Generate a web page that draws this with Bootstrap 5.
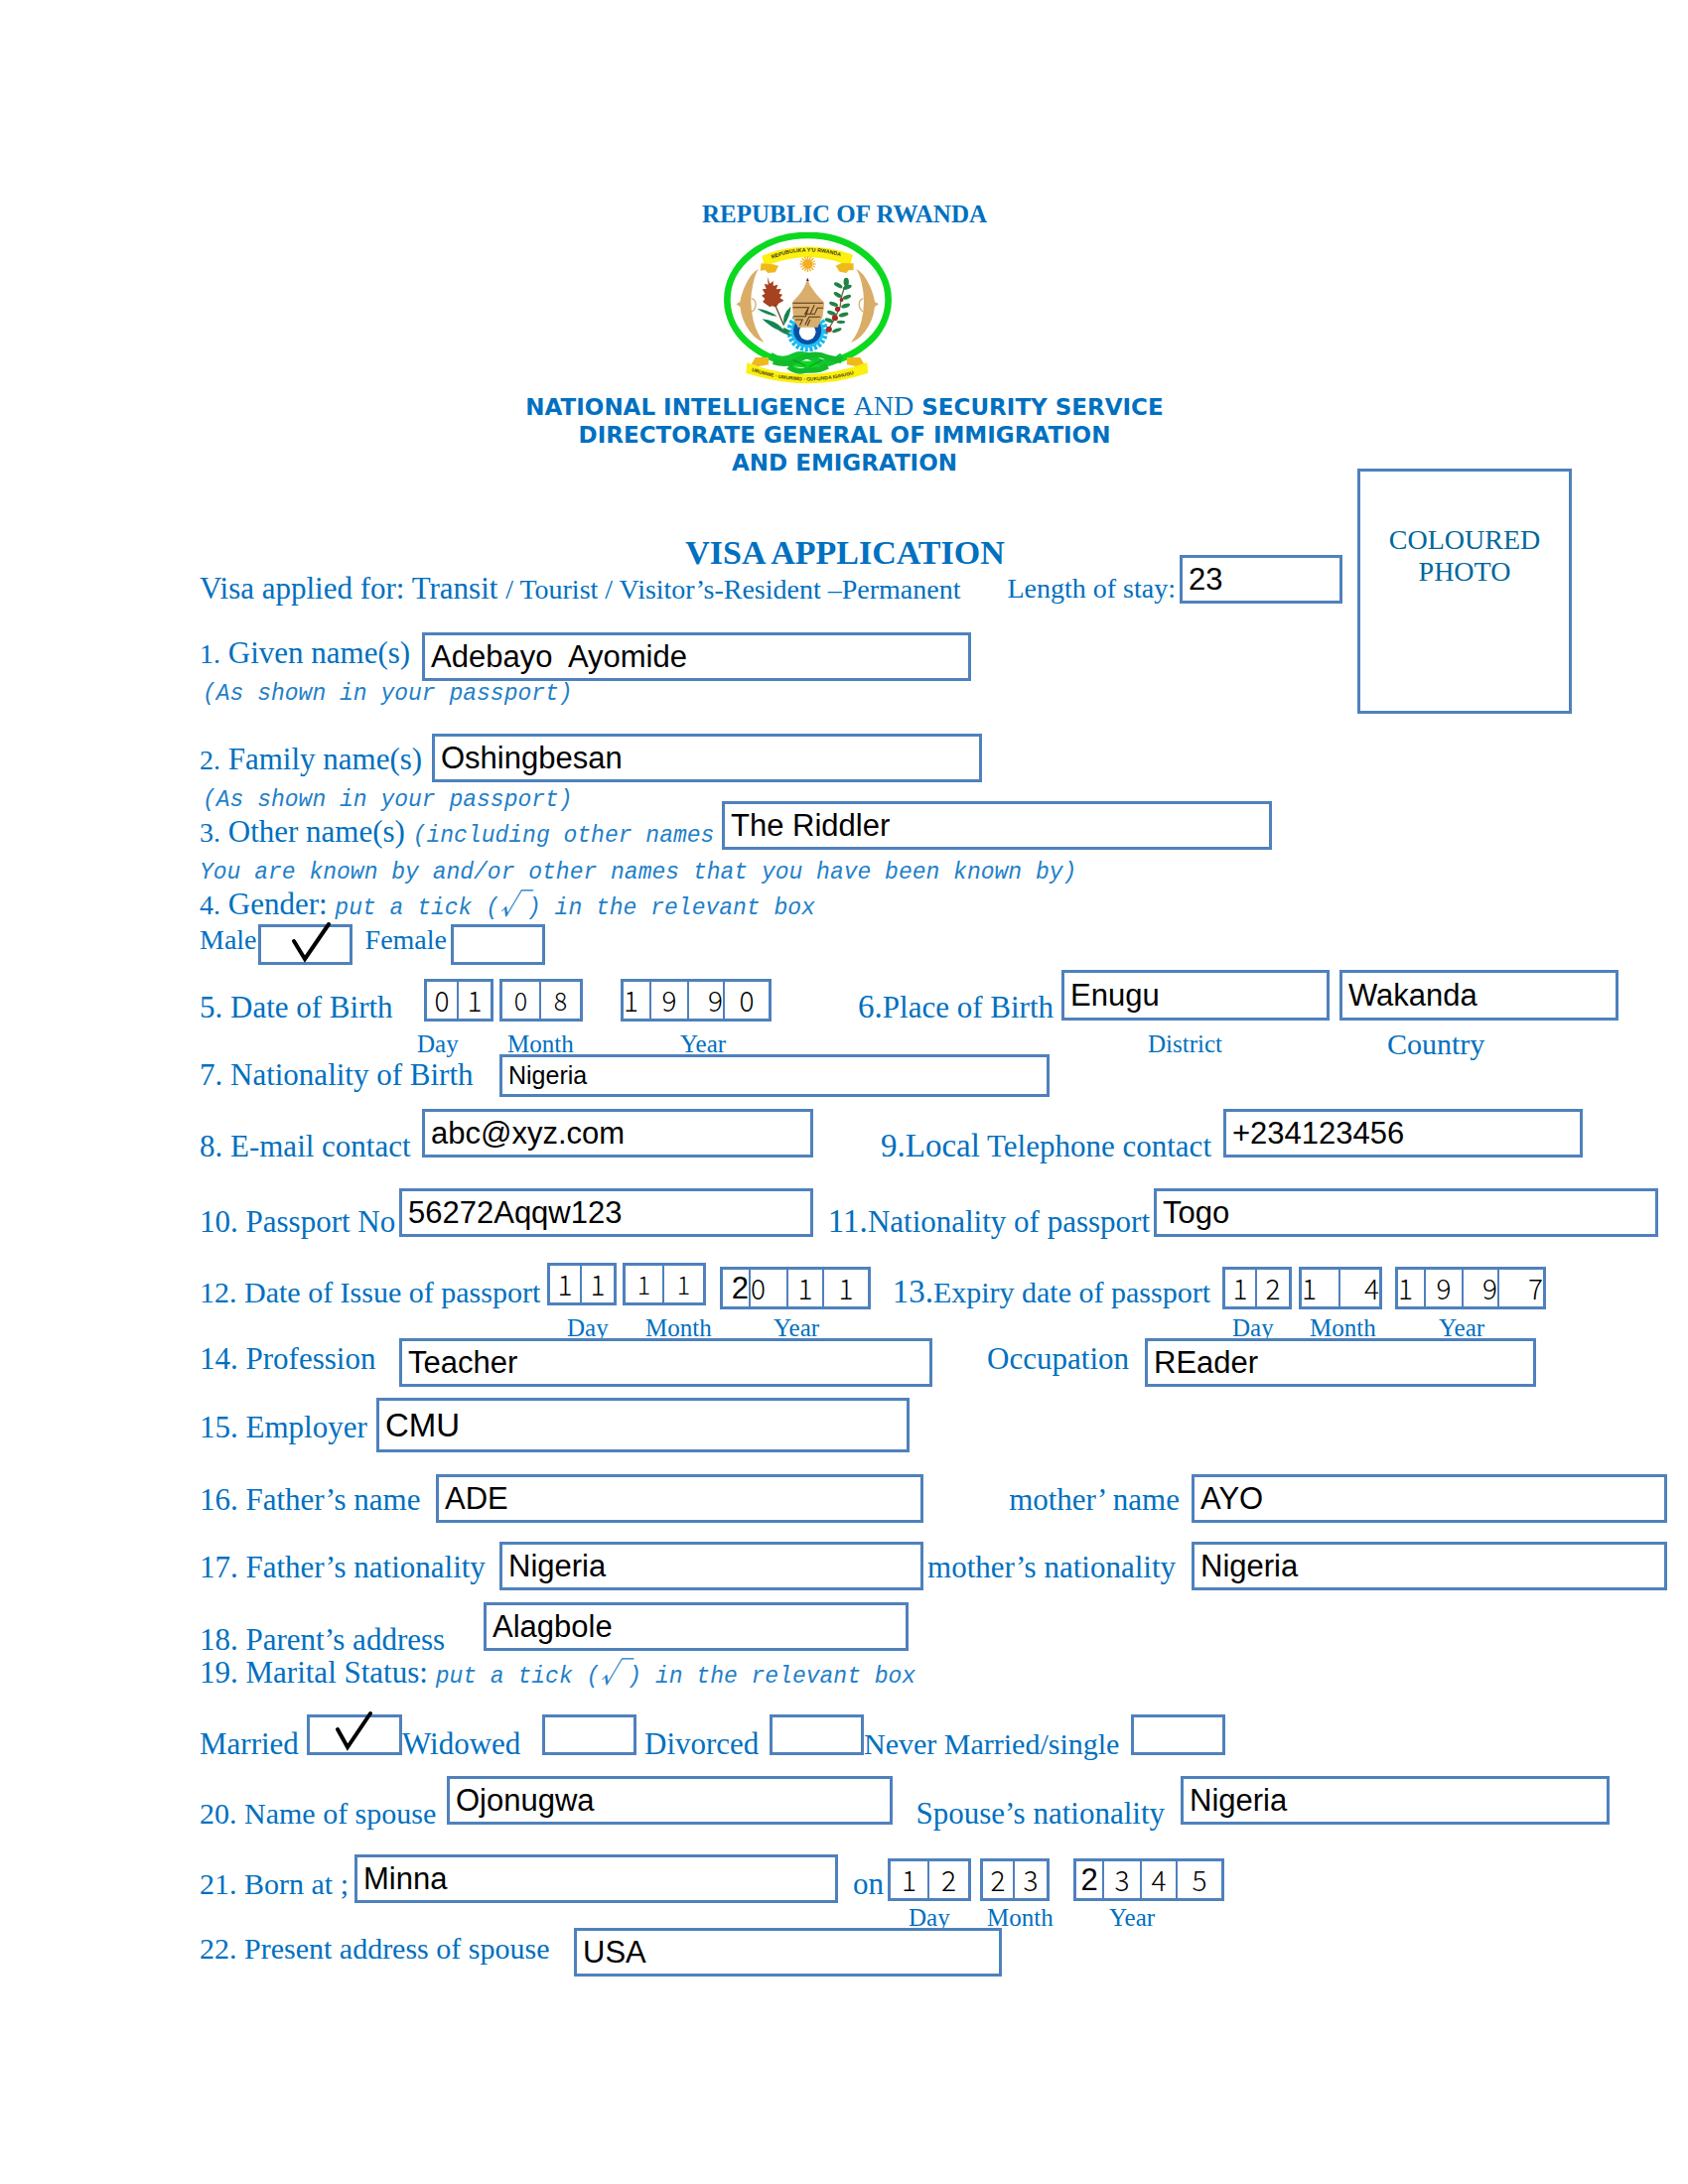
<!DOCTYPE html>
<html lang="en">
<head>
<meta charset="utf-8">
<meta name="viewport" content="width=device-width, initial-scale=1">
<title>Visa Application</title>
<link href="https://cdn.jsdelivr.net/npm/bootstrap@5.3.0/dist/css/bootstrap.min.css" rel="stylesheet">
<style>
:root { --ink: #0070c0; --rule: #4f81bd; }
body { background: #fff; color: var(--ink); font-family: "Liberation Serif", serif; font-size: 31px; line-height: 32px; }
.sheet { padding: 202px 21px 100px 201px; }
.masthead { padding-right: 179px; }
.state { font-size: 25px; line-height: 28px; font-weight: 700; margin: 0; }
.emblem { display: block; width: 169px; height: 155px; margin: 4px auto 7px; }
.emblem-wrap { padding-right: 75px; }
.agency { font: 700 23px/28px "DejaVu Sans", sans-serif; margin: 0; }
.agency-and { font: 400 28px/20px "Liberation Serif", serif; }
.top-part { display: grid; grid-template-columns: 1166fr 216fr 96fr; }
.form-title { font-size: 34px; line-height: 36px; font-weight: 700; margin: 0; padding: 59px 0 0 134px; }
.photo { border: 3px solid var(--rule); height: 247px; margin-top: -8px; padding-top: 53px; font-size: 28px; color: #00679c; }

/* form lines: columns are proportional shares of the sheet width */
.line { display: grid; align-items: start; }
.line > *, .captions > * { min-width: 0; white-space: nowrap; }
.t28 { font-size: 28px; }
.t33 { font-size: 33px; line-height: 20px; }
.t30 { font-size: 30px; }
.drop-0 { padding-top: 2px; }
.drop-1 { padding-top: 5px; }
.drop-2 { padding-top: 10px; }
.drop-3 { padding-top: 14px; }
.drop-4 { padding-top: 18px; }
.drop-5 { padding-top: 22px; }
.end-m { text-align: right; padding-right: 12px; }
.end-s { text-align: right; padding-right: 4px; }
.note { font: italic 400 23px/28px "Liberation Mono", monospace; margin: 0; color: #1f80c8; }
.root-sign { font-family: "Noto Sans CJK JP", sans-serif; font-size: 28px; line-height: 0; }
.indent { padding-left: 3px; }

.box-in { position: relative; display: block; width: 100%; height: 49px; border: 3px solid var(--rule); border-radius: 0; background: #fff; color: #000; padding: 0 6px; font: 400 31px/35px "Liberation Sans", sans-serif; }
.box-in.tall { height: 51px; }
.box-in.taller { height: 55px; font-size: 33px; }
.box-in.short { height: 43px; font-size: 25px; }
.box-in.raised { margin-top: -13px; }
.box-in.raised-more { margin-top: -16px; }

.tickbox { position: relative; display: block; height: 41px; }
.tickbox input { appearance: none; display: block; width: 100%; height: 100%; margin: 0; border: 3px solid var(--rule); background: #fff; }
.tickbox svg { position: absolute; left: 0; top: 0; overflow: visible; pointer-events: none; }

.dates { display: grid; }
.dates > :nth-child(2) { grid-column: 3; }
.dates > :nth-child(3) { grid-column: 5; }
.dates.birth { grid-template-columns: 70fr 6fr 84fr 38fr 152fr; }
.dates.issue { grid-template-columns: 70fr 6fr 84fr 14fr 152fr; }
.dates.expiry { grid-template-columns: 70fr 7fr 84fr 13fr 152fr; }
.dates.spouse { grid-template-columns: 84fr 9fr 70fr 24fr 152fr; }
.cells { display: grid; height: 43px; border: 3px solid var(--rule); background: #fff; min-width: 0; }
.cells.two { grid-template-columns: 1fr 1fr; }
.cells.four { grid-template-columns: 28fr 38fr 36fr 44fr; }
.cells input { width: 100%; min-width: 0; height: 37px; border: 0; border-right: 2px solid var(--rule); border-radius: 0; padding: 0; background: transparent; color: #000; text-align: center; font: 300 28px/37px "Noto Sans CJK JP", sans-serif; }
.cells input:last-child { border-right: 0; }
.cells.small-type input { font-size: 25px; }
.cells .plain { font: 400 31px/37px "Liberation Sans", sans-serif; }

.captions { display: grid; height: 24px; font-size: 25px; line-height: 28px; }
.captions > :first-child { grid-column: 2; }

.l-stay { grid-template-columns: 787fr 200fr 164fr 15fr; min-height: 62px; }
.l-given { grid-template-columns: 224fr 553fr 389fr; min-height: 48px; }
.l-given .box-in { margin-bottom: -1px; }
.l-family { grid-template-columns: 234fr 554fr 690fr; min-height: 53px; margin-top: 20px; }
.l-other { grid-template-columns: 526fr 554fr 398fr; min-height: 45px; }
.l-text { min-height: 38px; }
.l-sex { grid-template-columns: 59fr 95fr 99fr 95fr 1130fr; min-height: 46px; }
.l-birth { grid-template-columns: 226fr 350fr 292fr 270fr 10fr 281fr 49fr; min-height: 61px; }
.l-birth > :last-child { grid-column: 6; }
.l-birth .dates { padding-top: 9px; }
.c-birth { grid-template-columns: 219fr 91fr 174fr 471fr 241fr 282fr; }
.l-origin { grid-template-columns: 302fr 554fr 622fr; min-height: 55px; }
.l-contact { grid-template-columns: 224fr 394fr 413fr 362fr 85fr; min-height: 80px; }
.l-passport { grid-template-columns: 201fr 417fr 343fr 508fr 9fr; min-height: 75px; }
.l-validity { grid-template-columns: 350fr 326fr 354fr 326fr 122fr; min-height: 52px; }
.c-validity { grid-template-columns: 370fr 79fr 129fr 462fr 78fr 130fr 230fr; }
.l-work { grid-template-columns: 201fr 537fr 214fr 394fr 132fr; min-height: 60px; }
.l-employer { grid-template-columns: 178fr 537fr 763fr; min-height: 77px; }
.l-parents { grid-template-columns: 238fr 491fr 270fr 479fr; min-height: 68px; }
.l-parents-nat { grid-template-columns: 302fr 427fr 270fr 479fr; min-height: 61px; }
.l-address { grid-template-columns: 286fr 428fr 764fr; min-height: 55px; }
.l-status-title { min-height: 58px; }
.l-status { grid-template-columns: 108fr 96fr 141fr 95fr 134fr 95fr 269fr 95fr 445fr; min-height: 62px; }
.l-spouse { grid-template-columns: 249fr 449fr 290fr 432fr 58fr; min-height: 79px; }
.l-born { grid-template-columns: 156fr 487fr 50fr 339fr 446fr; min-height: 50px; }
.l-born .dates { align-self: center; }
.c-born { grid-template-columns: 714fr 79fr 123fr 562fr; }
.l-present { grid-template-columns: 377fr 431fr 670fr; }
</style>
<script src="https://cdn.jsdelivr.net/npm/bootstrap@5.3.0/dist/js/bootstrap.bundle.min.js"></script>
</head>
<body>
<form class="sheet">
  <header class="masthead text-center">
    <p class="state">REPUBLIC OF RWANDA</p>
    <div class="emblem-wrap">
    <svg class="emblem" viewBox="55 24 506 465" preserveAspectRatio="none" role="img" aria-label="Coat of arms of Rwanda">
      <ellipse cx="308" cy="228" rx="243" ry="195" fill="#fff" stroke="#0bd91f" stroke-width="20"/>
      <path d="M170 95 Q300 42 444 92 L434 132 L415 119 Q308 78 190 122 L178 131Z" fill="#fbf00f"/>
      <path d="M167 118l36 3 17 4-10 20-22 2-9-9-14 2ZM446 118l-36-1-18 8 12 18 20 4 8-9 14 1Z" fill="#efb91e"/>
      <path id="motto-top" d="M200 104 Q305 62 420 101" fill="none"/>
      <text font-family="Liberation Sans" font-weight="700" font-size="16" fill="#3a3710"><textPath href="#motto-top">REPUBULIKA Y'U RWANDA</textPath></text>
      <g stroke="#f1b52f" stroke-width="4"><path d="M308 96v48M284 120h48M291 103l34 34M325 103l-34 34M299 98l18 44M317 98l-18 44M286 111l44 18M286 129l44-18"/></g>
      <circle cx="308" cy="120" r="14" fill="#f2ae25"/>
      <g fill="#d9ad68">
        <path d="M160 135Q137 144 117 190Q106 218 104 234L92 241L104 249Q108 290 133 323Q152 349 176 357Q154 330 144 291Q130 235 143 180Q149 151 160 135Z"/>
        <path d="M454 135Q477 144 497 190Q508 218 510 234L522 241L510 249Q506 290 481 323Q462 349 438 357Q460 330 470 291Q484 235 471 180Q465 151 454 135Z"/>
      </g>
      <path d="M139 224q12 4 12 18t-12 22M475 224q-12 4-12 18t12 22" fill="none" stroke="#d9ad68" stroke-width="4"/>
      <circle cx="307" cy="323" r="55" fill="none" stroke="#16b9ee" stroke-width="14" stroke-dasharray="9 5"/>
      <circle cx="307" cy="323" r="50" fill="#22bff0"/>
      <circle cx="307" cy="321" r="42" fill="#0750a8"/>
      <circle cx="307" cy="325" r="25" fill="#fff"/>
      <path d="M307 164Q300 192 279 216Q267 228 261 237L265 289Q276 305 278 311H338Q345 294 353 278L358 236Q337 216 326 200Q311 182 307 164Z" fill="#d9ae6c"/>
      <path d="M304 171l3-10 5 11Z" fill="#3b2a18"/>
      <path d="M263 238H354M263 251h48l-12 20h30l8-18h18M264 278h38l7-22M270 288h22l-8 18M300 304l12-24h34M315 288l-8 18M328 244l-12 26" fill="none" stroke="#50361c" stroke-width="3"/>
      <path d="M186 158l8 21 10-8 0 15 14-4-5 14 15-1-7 14 11 3-8 10 12 8-16 9-7 11-14-3-5 3-13-9-9-7 7-9-10-10 10-6-8-13 12-1-6-15 12 2Z" fill="#a6421f"/>
      <path d="M208 240L236 305" stroke="#6b4b22" stroke-width="4" fill="none"/>
      <path d="M236 305Q229 272 257 248Q256 276 236 305ZM155 255Q190 258 216 278Q185 276 155 255ZM170 286Q210 289 232 315L260 336Q237 334 218 319Q200 313 170 286ZM234 312q16 3 22 18l-20-10Z" fill="#168452"/>
      <path d="M425 178Q408 210 406 248Q390 288 364 328" fill="none" stroke="#69714b" stroke-width="4"/>
      <g fill="#208345">
        <ellipse cx="424" cy="174" rx="8" ry="13"/>
        <ellipse cx="400" cy="184" rx="14" ry="6" transform="rotate(30 400 184)"/><ellipse cx="427" cy="190" rx="14" ry="6" transform="rotate(-20 427 190)"/><ellipse cx="398" cy="213" rx="13" ry="6" transform="rotate(30 398 213)"/><ellipse cx="426" cy="220" rx="13" ry="6" transform="rotate(-20 426 220)"/>
        <ellipse cx="386" cy="241" rx="14" ry="6" transform="rotate(20 386 241)"/><ellipse cx="422" cy="246" rx="14" ry="6" transform="rotate(-20 422 246)"/><ellipse cx="380" cy="268" rx="14" ry="6" transform="rotate(20 380 268)"/><ellipse cx="416" cy="273" rx="15" ry="6" transform="rotate(-15 416 273)"/><ellipse cx="372" cy="290" rx="13" ry="6" transform="rotate(20 372 290)"/><ellipse cx="408" cy="295" rx="13" ry="5"/><ellipse cx="396" cy="320" rx="15" ry="5" transform="rotate(-20 396 320)"/>
      </g>
      <g fill="#a92720"><circle cx="398" cy="256" r="8"/><circle cx="410" cy="228" r="6"/><circle cx="390" cy="283" r="9"/><circle cx="372" cy="317" r="9"/></g>
      <path d="M150 402h40v22l-32 6-20-8ZM426 402h40l12 20-20 8-32-6Z" fill="#efb91e"/>
      <path d="M125 418Q300 488 487 417L490 449Q310 512 122 449Z" fill="#fbf00f"/>
      <path d="M195 396Q230 420 268 398Q300 386 340 414Q370 430 412 397" fill="none" stroke="#12c52e" stroke-width="20"/>
      <path d="M204 415Q250 430 288 405Q330 384 366 402L410 412M250 430Q276 450 304 440Q340 444 368 428" fill="none" stroke="#12ba2c" stroke-width="17"/>
      <path d="M264 410l38 18M352 410l-40 20" stroke="#0b8f20" stroke-width="3"/>
      <path id="motto-foot" d="M138 443Q310 502 480 442" fill="none"/>
      <text font-family="Liberation Sans" font-weight="700" font-size="15" fill="#4a4510"><textPath href="#motto-foot">UBUMWE - UMURIMO - GUKUNDA IGIHUGU</textPath></text>
    </svg>
    </div>
    <h1 class="agency">NATIONAL INTELLIGENCE <span class="agency-and">AND</span> SECURITY SERVICE<br>DIRECTORATE GENERAL OF IMMIGRATION<br>AND EMIGRATION</h1>
  </header>

  <section class="top-part">
    <div>
      <h2 class="form-title text-center">VISA APPLICATION</h2>
      <div class="line l-stay">
        <span class="drop-0">Visa applied for: Transit <span class="t28">/ Tourist / Visitor’s-Resident –Permanent</span></span>
        <label class="t28 drop-0 end-s" for="stay">Length of stay:</label>
        <input class="box-in raised-more" id="stay" value="23">
      </div>
      <div class="line l-given">
        <label class="drop-1" for="given"><span class="t28">1.</span> Given name(s)</label>
        <input class="box-in" id="given" value="Adebayo  Ayomide">
      </div>
      <p class="note indent">(As shown in your passport)</p>
    </div>
    <div class="photo text-center">COLOURED<br>PHOTO</div>
  </section>

  <div class="line l-family">
    <label class="drop-2" for="family"><span class="t28">2.</span> Family name(s)</label>
    <input class="box-in" id="family" value="Oshingbesan">
  </div>
  <p class="note indent">(As shown in your passport)</p>
  <div class="line l-other">
    <label class="drop-0" for="other"><span class="t28">3.</span> Other name(s) <span class="note">(including other names</span></label>
    <input class="box-in raised" id="other" value="The Riddler">
  </div>
  <p class="note">You are known by and/or other names that you have been known by)</p>
  <div class="l-text drop-0"><span class="t28">4.</span> Gender: <span class="note">put a tick (<span class="root-sign">√</span>) in the relevant box</span></div>
  <div class="line l-sex">
    <label class="t28" for="male">Male</label>
    <span class="tickbox"><input type="checkbox" id="male" checked><svg width="95" height="41"><path d="M36 17L47 35L71 0" fill="none" stroke="#000" stroke-width="4" stroke-linecap="round"/></svg></span>
    <label class="t28 end-s" for="female">Female</label>
    <span class="tickbox"><input type="checkbox" id="female"></span>
  </div>

  <div class="line l-birth">
    <label class="drop-5" for="dob1">5. Date of Birth</label>
    <div class="dates birth">
      <div class="cells two"><input id="dob1" value="0" aria-label="Birth day, digit 1"><input value="1" aria-label="Birth day, digit 2"></div>
      <div class="cells two small-type"><input value="0" aria-label="Birth month, digit 1"><input value="8" aria-label="Birth month, digit 2"></div>
      <div class="cells four"><input class="text-start" value="1" aria-label="Birth year, digit 1"><input value="9" aria-label="Birth year, digit 2"><input class="text-end" value="9" aria-label="Birth year, digit 3"><input value="0" aria-label="Birth year, digit 4"></div>
    </div>
    <label class="drop-5 text-end pe-2" for="district"><span class="t33">6.</span>Place of Birth</label>
    <input class="box-in tall" id="district" value="Enugu">
    <input class="box-in tall" id="country" value="Wakanda">
  </div>
  <div class="captions c-birth">
    <span>Day</span><span>Month</span><span>Year</span><label for="district">District</label><label class="t30" for="country">Country</label>
  </div>
  <div class="line l-origin">
    <label class="drop-1" for="origin">7. Nationality of Birth</label>
    <input class="box-in short" id="origin" value="Nigeria">
  </div>
  <div class="line l-contact">
    <label class="drop-5" for="email">8. E-mail contact</label>
    <input class="box-in" id="email" value="abc@xyz.com">
    <label class="drop-5 end-m" for="phone"><span class="t33">9.Local</span> Telephone contact</label>
    <input class="box-in" id="phone" value="+234123456">
  </div>
  <div class="line l-passport">
    <label class="drop-4" for="passno">10. Passport No</label>
    <input class="box-in" id="passno" value="56272Aqqw123">
    <label class="drop-4 end-s" for="passnat"><span class="t33">11.</span>Nationality of passport</label>
    <input class="box-in" id="passnat" value="Togo">
  </div>
  <div class="line l-validity">
    <label class="drop-3 t30" for="iss1">12. Date of Issue of passport</label>
    <div class="dates issue">
      <div class="cells two"><input id="iss1" value="1" aria-label="Issue day, digit 1"><input value="1" aria-label="Issue day, digit 2"></div>
      <div class="cells two small-type"><input value="1" aria-label="Issue month, digit 1"><input value="1" aria-label="Issue month, digit 2"></div>
      <div class="cells four mt-1"><input class="plain text-end" value="2" aria-label="Issue year, digit 1"><input class="text-start" value="0" aria-label="Issue year, digit 2"><input value="1" aria-label="Issue year, digit 3"><input value="1" aria-label="Issue year, digit 4"></div>
    </div>
    <label class="drop-3 end-m t30" for="exp1"><span class="t33">13.</span>Expiry date of passport</label>
    <div class="dates expiry pt-1">
      <div class="cells two"><input id="exp1" value="1" aria-label="Expiry day, digit 1"><input value="2" aria-label="Expiry day, digit 2"></div>
      <div class="cells two"><input class="text-start" value="1" aria-label="Expiry month, digit 1"><input class="text-end" value="4" aria-label="Expiry month, digit 2"></div>
      <div class="cells four"><input class="text-start" value="1" aria-label="Expiry year, digit 1"><input value="9" aria-label="Expiry year, digit 2"><input class="text-end" value="9" aria-label="Expiry year, digit 3"><input class="text-end" value="7" aria-label="Expiry year, digit 4"></div>
    </div>
  </div>
  <div class="captions c-validity">
    <span>Day</span><span>Month</span><span>Year</span><span>Day</span><span>Month</span><span>Year</span>
  </div>
  <div class="line l-work">
    <label class="drop-1" for="profession">14. Profession</label>
    <input class="box-in" id="profession" value="Teacher">
    <label class="drop-1 text-end pe-3" for="occupation">Occupation</label>
    <input class="box-in" id="occupation" value="REader">
  </div>
  <div class="line l-employer">
    <label class="drop-3" for="employer">15. Employer</label>
    <input class="box-in taller" id="employer" value="CMU">
  </div>
  <div class="line l-parents">
    <label class="drop-2" for="father">16. Father’s name</label>
    <input class="box-in" id="father" value="ADE">
    <label class="drop-2 end-m" for="mother">mother’ name</label>
    <input class="box-in" id="mother" value="AYO">
  </div>
  <div class="line l-parents-nat">
    <label class="drop-2" for="fathernat">17. Father’s nationality</label>
    <input class="box-in" id="fathernat" value="Nigeria">
    <label class="drop-2 text-end pe-3" for="mothernat">mother’s nationality</label>
    <input class="box-in" id="mothernat" value="Nigeria">
  </div>
  <div class="line l-address">
    <label class="drop-5" for="address">18. Parent’s address</label>
    <input class="box-in" id="address" value="Alagbole">
  </div>
  <div class="l-status-title">19. Marital Status: <span class="note">put a tick (<span class="root-sign">√</span>) in the relevant box</span></div>
  <div class="line l-status">
    <label class="drop-3" for="married">Married</label>
    <span class="tickbox"><input type="checkbox" id="married" checked><svg width="95" height="41"><path d="M31 15L41 33L64 -1" fill="none" stroke="#000" stroke-width="4" stroke-linecap="round"/></svg></span>
    <label class="drop-3" for="widowed">Widowed</label>
    <span class="tickbox"><input type="checkbox" id="widowed"></span>
    <label class="drop-3 ps-2" for="divorced">Divorced</label>
    <span class="tickbox"><input type="checkbox" id="divorced"></span>
    <label class="drop-3 t30" for="single">Never Married/single</label>
    <span class="tickbox"><input type="checkbox" id="single"></span>
  </div>
  <div class="line l-spouse">
    <label class="drop-5 t30" for="spouse">20. Name of spouse</label>
    <input class="box-in" id="spouse" value="Ojonugwa">
    <label class="drop-5 text-end pe-3" for="spousenat">Spouse’s nationality</label>
    <input class="box-in" id="spousenat" value="Nigeria">
  </div>
  <div class="line l-born">
    <label class="drop-3 t30" for="born">21. Born at ;</label>
    <input class="box-in" id="born" value="Minna">
    <label class="drop-3 end-s" for="sp1">on</label>
    <div class="dates spouse">
      <div class="cells two"><input id="sp1" value="1" aria-label="Spouse birth day, digit 1"><input value="2" aria-label="Spouse birth day, digit 2"></div>
      <div class="cells two"><input value="2" aria-label="Spouse birth month, digit 1"><input value="3" aria-label="Spouse birth month, digit 2"></div>
      <div class="cells four"><input class="plain" value="2" aria-label="Spouse birth year, digit 1"><input value="3" aria-label="Spouse birth year, digit 2"><input value="4" aria-label="Spouse birth year, digit 3"><input value="5" aria-label="Spouse birth year, digit 4"></div>
    </div>
  </div>
  <div class="captions c-born">
    <span>Day</span><span>Month</span><span>Year</span>
  </div>
  <div class="line l-present">
    <label class="drop-1 t30" for="present">22. Present address of spouse</label>
    <input class="box-in" id="present" value="USA">
  </div>
</form>
</body>
</html>
